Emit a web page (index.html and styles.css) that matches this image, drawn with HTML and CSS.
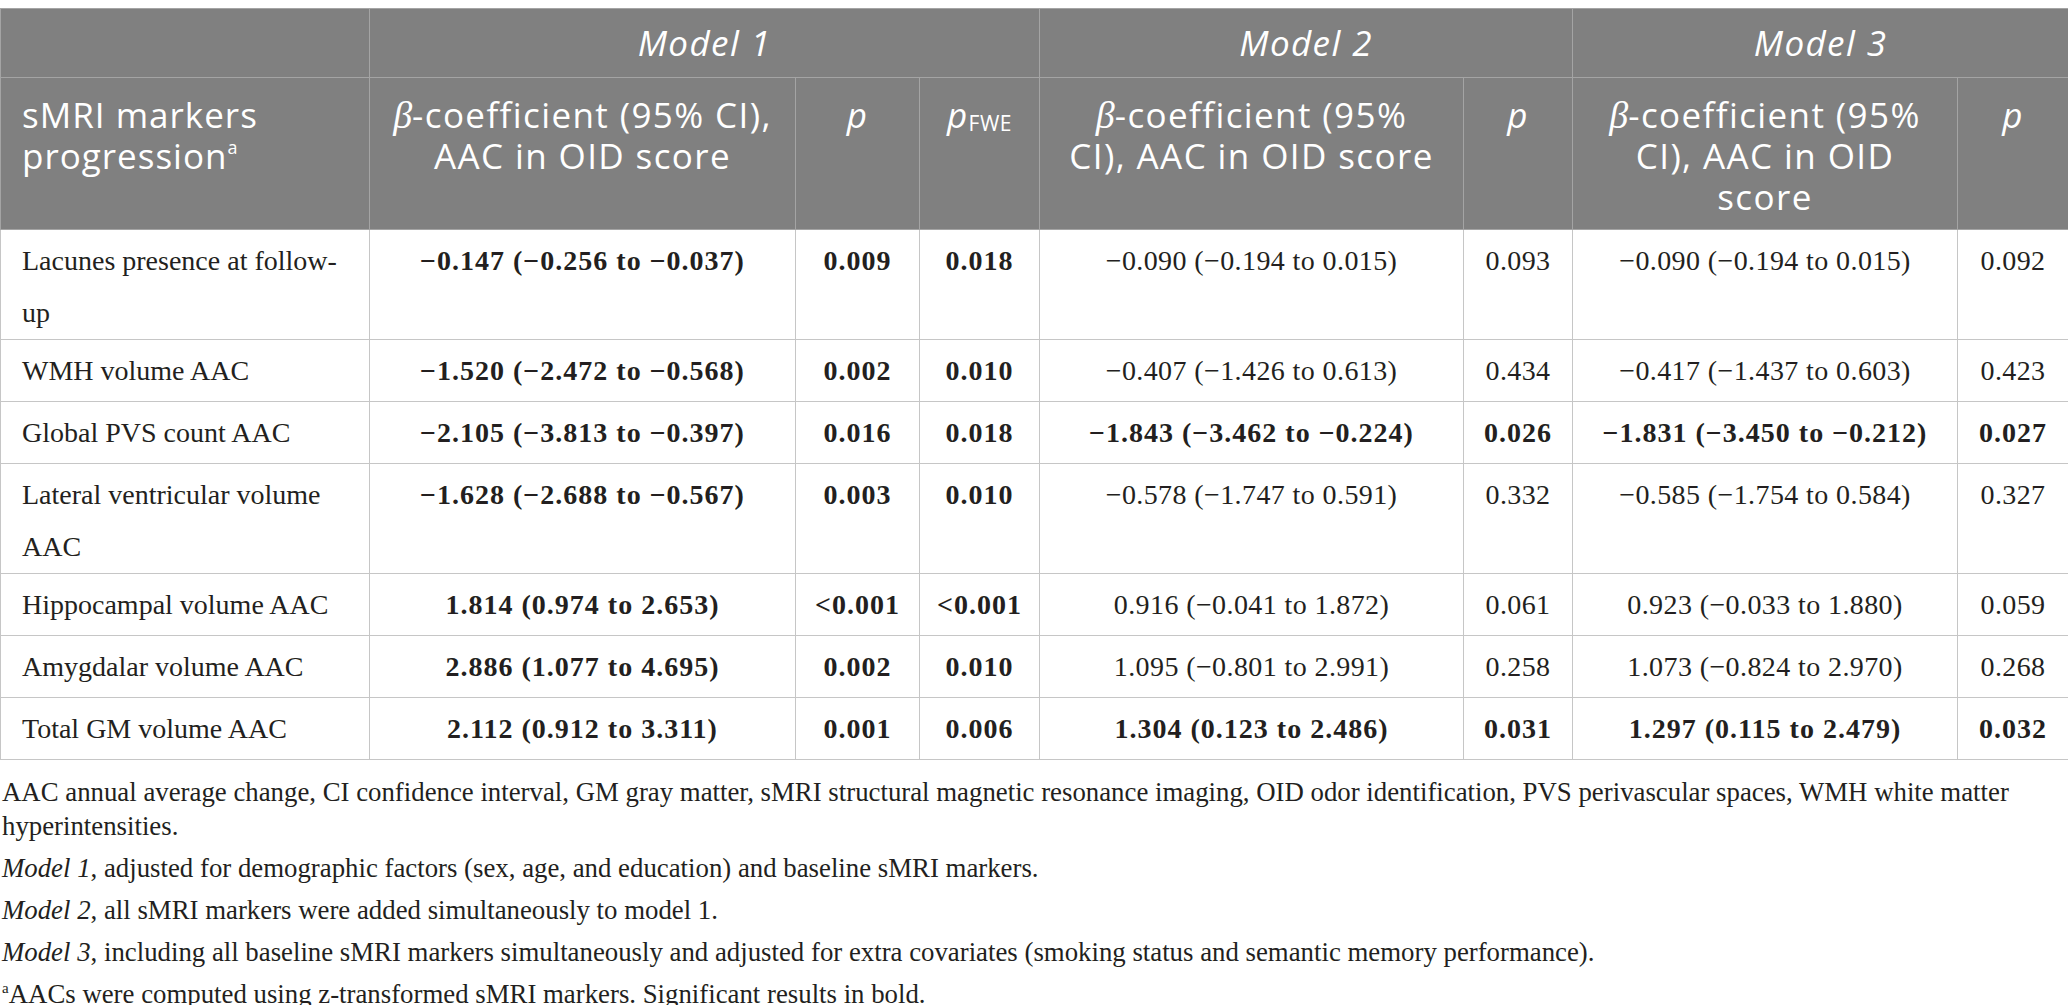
FILE: index.html
```html
<!DOCTYPE html>
<html lang="en">
<head>
    <meta charset="UTF-8">
    <meta name="viewport" content="width=device-width, initial-scale=1.0">
    <title>sMRI markers progression and OID score</title>

    <link rel="stylesheet" href="styles.css">
</head>
<body>
    <table class="results">
        <colgroup>
            <col class="col-marker">
            <col class="col-beta1">
            <col class="col-p1">
            <col class="col-fwe">
            <col class="col-beta2">
            <col class="col-p2">
            <col class="col-beta3">
            <col class="col-p3">
        </colgroup>
        <thead>
            <tr class="model-row">
                <th></th>
                <th colspan="3"><em>Model 1</em></th>
                <th colspan="2"><em>Model 2</em></th>
                <th colspan="2"><em>Model 3</em></th>
            </tr>
            <tr class="label-row">
                <th class="marker">sMRI markers<br>progression<sup>a</sup></th>
                <th><i class="beta">β</i>-coefficient (95% CI),<br>AAC in OID score</th>
                <th><i>p</i></th>
                <th><i>p</i><span class="sub">FWE</span></th>
                <th><i class="beta">β</i>-coefficient (95%<br>CI), AAC in OID score</th>
                <th><i>p</i></th>
                <th><i class="beta">β</i>-coefficient (95%<br>CI), AAC in OID<br>score</th>
                <th><i>p</i></th>
            </tr>
        </thead>
        <tbody>
            <tr class="tall">
                <td class="marker">Lacunes presence at follow-<br>up</td>
                <td class="sig">−0.147 (−0.256 to −0.037)</td>
                <td class="sig">0.009</td>
                <td class="sig">0.018</td>
                <td>−0.090 (−0.194 to 0.015)</td>
                <td>0.093</td>
                <td>−0.090 (−0.194 to 0.015)</td>
                <td>0.092</td>
            </tr>
            <tr>
                <td class="marker">WMH volume AAC</td>
                <td class="sig">−1.520 (−2.472 to −0.568)</td>
                <td class="sig">0.002</td>
                <td class="sig">0.010</td>
                <td>−0.407 (−1.426 to 0.613)</td>
                <td>0.434</td>
                <td>−0.417 (−1.437 to 0.603)</td>
                <td>0.423</td>
            </tr>
            <tr>
                <td class="marker">Global PVS count AAC</td>
                <td class="sig">−2.105 (−3.813 to −0.397)</td>
                <td class="sig">0.016</td>
                <td class="sig">0.018</td>
                <td class="sig">−1.843 (−3.462 to −0.224)</td>
                <td class="sig">0.026</td>
                <td class="sig">−1.831 (−3.450 to −0.212)</td>
                <td class="sig">0.027</td>
            </tr>
            <tr class="tall">
                <td class="marker">Lateral ventricular volume<br>AAC</td>
                <td class="sig">−1.628 (−2.688 to −0.567)</td>
                <td class="sig">0.003</td>
                <td class="sig">0.010</td>
                <td>−0.578 (−1.747 to 0.591)</td>
                <td>0.332</td>
                <td>−0.585 (−1.754 to 0.584)</td>
                <td>0.327</td>
            </tr>
            <tr>
                <td class="marker">Hippocampal volume AAC</td>
                <td class="sig">1.814 (0.974 to 2.653)</td>
                <td class="sig">&lt;0.001</td>
                <td class="sig">&lt;0.001</td>
                <td>0.916 (−0.041 to 1.872)</td>
                <td>0.061</td>
                <td>0.923 (−0.033 to 1.880)</td>
                <td>0.059</td>
            </tr>
            <tr>
                <td class="marker">Amygdalar volume AAC</td>
                <td class="sig">2.886 (1.077 to 4.695)</td>
                <td class="sig">0.002</td>
                <td class="sig">0.010</td>
                <td>1.095 (−0.801 to 2.991)</td>
                <td>0.258</td>
                <td>1.073 (−0.824 to 2.970)</td>
                <td>0.268</td>
            </tr>
            <tr>
                <td class="marker">Total GM volume AAC</td>
                <td class="sig">2.112 (0.912 to 3.311)</td>
                <td class="sig">0.001</td>
                <td class="sig">0.006</td>
                <td class="sig">1.304 (0.123 to 2.486)</td>
                <td class="sig">0.031</td>
                <td class="sig">1.297 (0.115 to 2.479)</td>
                <td class="sig">0.032</td>
            </tr>
        </tbody>
    </table>

    <div class="notes">
        <p>AAC annual average change, CI confidence interval, GM gray matter, sMRI structural magnetic resonance imaging, OID odor identification, PVS perivascular spaces, WMH white matter hyperintensities.</p>
        <p><em>Model 1</em>, adjusted for demographic factors (sex, age, and education) and baseline sMRI markers.</p>
        <p><em>Model 2</em>, all sMRI markers were added simultaneously to model 1.</p>
        <p><em>Model 3</em>, including all baseline sMRI markers simultaneously and adjusted for extra covariates (smoking status and semantic memory performance).</p>
        <p><sup>a</sup>AACs were computed using z-transformed sMRI markers. Significant results in bold.</p>
    </div>
</body>
</html>
```

FILE: styles.css
```css
/* table of sMRI markers vs OID score */
body {
    margin: 8px 0 0 0;
    background-color: #fff;
    color: #231f20;
    font-family: "Liberation Serif", "Times New Roman", serif;
}
.results {
    width: 2068px;
    table-layout: fixed;
    border-collapse: collapse;
}
.col-marker { width: 369px; }
.col-beta1 { width: 426px; }
.col-p1 { width: 124px; }
.col-fwe { width: 120px; }
.col-beta2 { width: 424px; }
.col-p2 { width: 109px; }
.col-beta3 { width: 385px; }
.col-p3 { width: 111px; }

th {
    background-color: #808080;
    color: #fff;
    font-family: "Open Sans", "Noto Sans", sans-serif;
    font-weight: normal;
    font-size: 35px;
    letter-spacing: 1.4px;
    border: 1px solid #a4a4a4;
    text-align: center;
    padding: 0 10px;
    white-space: nowrap;
}
.model-row th {
    height: 68px;
    vertical-align: middle;
    line-height: 40px;
}
.label-row th {
    height: 123px;
    vertical-align: top;
    line-height: 41px;
    padding-top: 16px;
    padding-bottom: 12px;
}
th.marker {
    text-align: left;
    padding-left: 21px;
    letter-spacing: 1px;
}
th sup {
    font-size: 18px;
    line-height: 0;
    vertical-align: 15px;
    letter-spacing: 0;
}
.beta {
    font-family: "Liberation Serif", serif;
    font-size: 38px;
    line-height: 0;
    letter-spacing: 0;
}
.sub {
    font-size: 21px;
    line-height: 0;
    letter-spacing: 0.5px;
    vertical-align: -3px;
}

td {
    border: 1px solid #c6c6c6;
    font-size: 28px;
    line-height: 52px;
    letter-spacing: 0.4px;
    text-align: center;
    vertical-align: top;
    padding: 5px 8px 0 8px;
    height: 56px;
}
tr.tall td {
    height: 100px;
}
td.marker {
    text-align: left;
    padding-left: 21px;
    letter-spacing: 0;
}
td.sig {
    font-weight: bold;
    letter-spacing: 1px;
}

.notes {
    margin-top: 15px;
    padding-left: 2px;
    font-size: 26.8px;
    line-height: 34px;
}
.notes p {
    margin: 0 0 8px 0;
}
.notes sup {
    font-size: 15px;
    line-height: 0;
    vertical-align: 10px;
}
```
